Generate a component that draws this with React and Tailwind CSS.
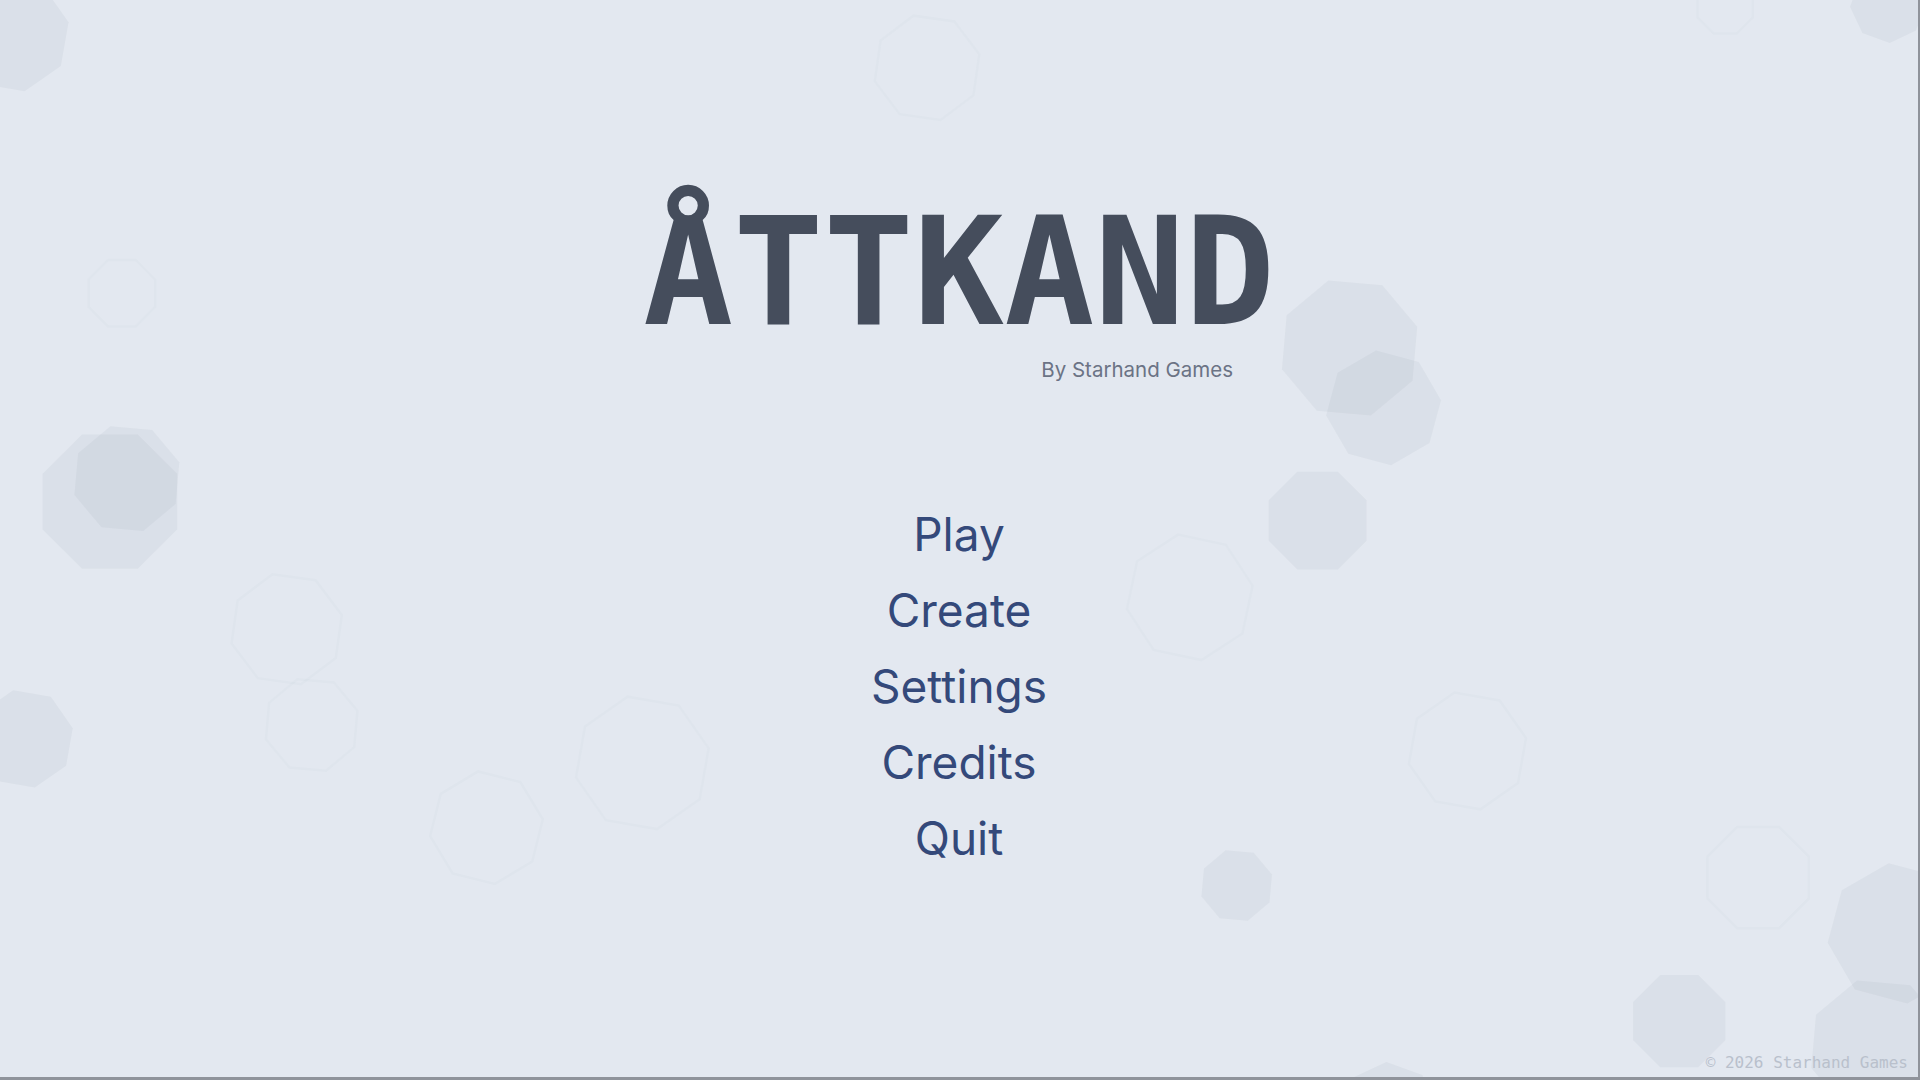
const filled = [
  [12, 35, 58, 10],
  [1890, 5, 38, 20],
  [110, 503, 73, 0],
  [127, 480, 55, 5],
  [1351, 349, 71, 5],
  [1385, 409, 58, 15],
  [1319, 522, 53, 0],
  [24, 741, 50, 10],
  [1238, 888, 37, 5],
  [1900, 936, 71, 15],
  [1681, 1024, 50, 0],
  [1880, 1050, 70, 5],
  [1390, 1115, 50, 20],
];

const outlined = [
  [928, 68, 54, 8],
  [122, 294, 36, 0],
  [1191, 599, 64, 12],
  [287, 631, 57, 8],
  [312, 727, 48, 5],
  [487, 830, 57, 14],
  [643, 765, 68, 10],
  [1760, 880, 55, 0],
  [1469, 753, 60, 10],
  [1727, 6, 30, 0],
];

function octagon(cx, cy, r, rot) {
  const pts = [];
  for (let k = 0; k < 8; k++) {
    const a = ((rot + 22.5 + k * 45) * Math.PI) / 180;
    pts.push(`${(cx + r * Math.cos(a)).toFixed(1)},${(cy + r * Math.sin(a)).toFixed(1)}`);
  }
  return pts.join(' ');
}

function Backdrop() {
  return (
    <svg className="absolute inset-0 w-full h-full pointer-events-none" viewBox="0 0 1920 1080" preserveAspectRatio="none">
      {outlined.map(([x, y, r, rot], i) => (
        <polygon key={`o${i}`} points={octagon(x, y, r, rot)} fill="none" stroke="#64748b" strokeOpacity="0.025" strokeWidth="2.5" />
      ))}
      {filled.map(([x, y, r, rot], i) => (
        <polygon key={`f${i}`} points={octagon(x, y, r, rot)} fill="#64748b" fillOpacity="0.065" />
      ))}
    </svg>
  );
}

const items = ['Play', 'Create', 'Settings', 'Credits', 'Quit'];

export default function App() {
  return (
    <div className="relative w-full h-screen overflow-hidden bg-[#e3e8f0] border-r-2 border-b-[3px] border-[#8f939b]">
      <Backdrop />
      <div className="relative flex flex-col items-center pt-[197px]">
        <div className="flex flex-col">
          <h1 className="font-['DejaVu_Sans_Mono',monospace] font-bold text-[150px] leading-none text-[#454d5c]">
            ÅTTKAND
          </h1>
          <p className="self-end mr-[42px] mt-[8px] font-['Inter',sans-serif] text-[20.5px] text-[#6b7385]">By Starhand Games</p>
        </div>
        <nav className="flex flex-col items-center gap-[22px] mt-[121px]">
          {items.map((label) => (
            <button
              key={label}
              type="button"
              className="font-['Inter',sans-serif] text-[46px] leading-[54px] text-[#34497a] hover:text-[#1e3a8a]"
            >
              {label}
            </button>
          ))}
        </nav>
      </div>
      <div className="absolute right-[10px] bottom-[2px] font-['DejaVu_Sans_Mono',monospace] text-base text-[#b9c0cc]">
        © 2026 Starhand Games
      </div>
    </div>
  );
}
